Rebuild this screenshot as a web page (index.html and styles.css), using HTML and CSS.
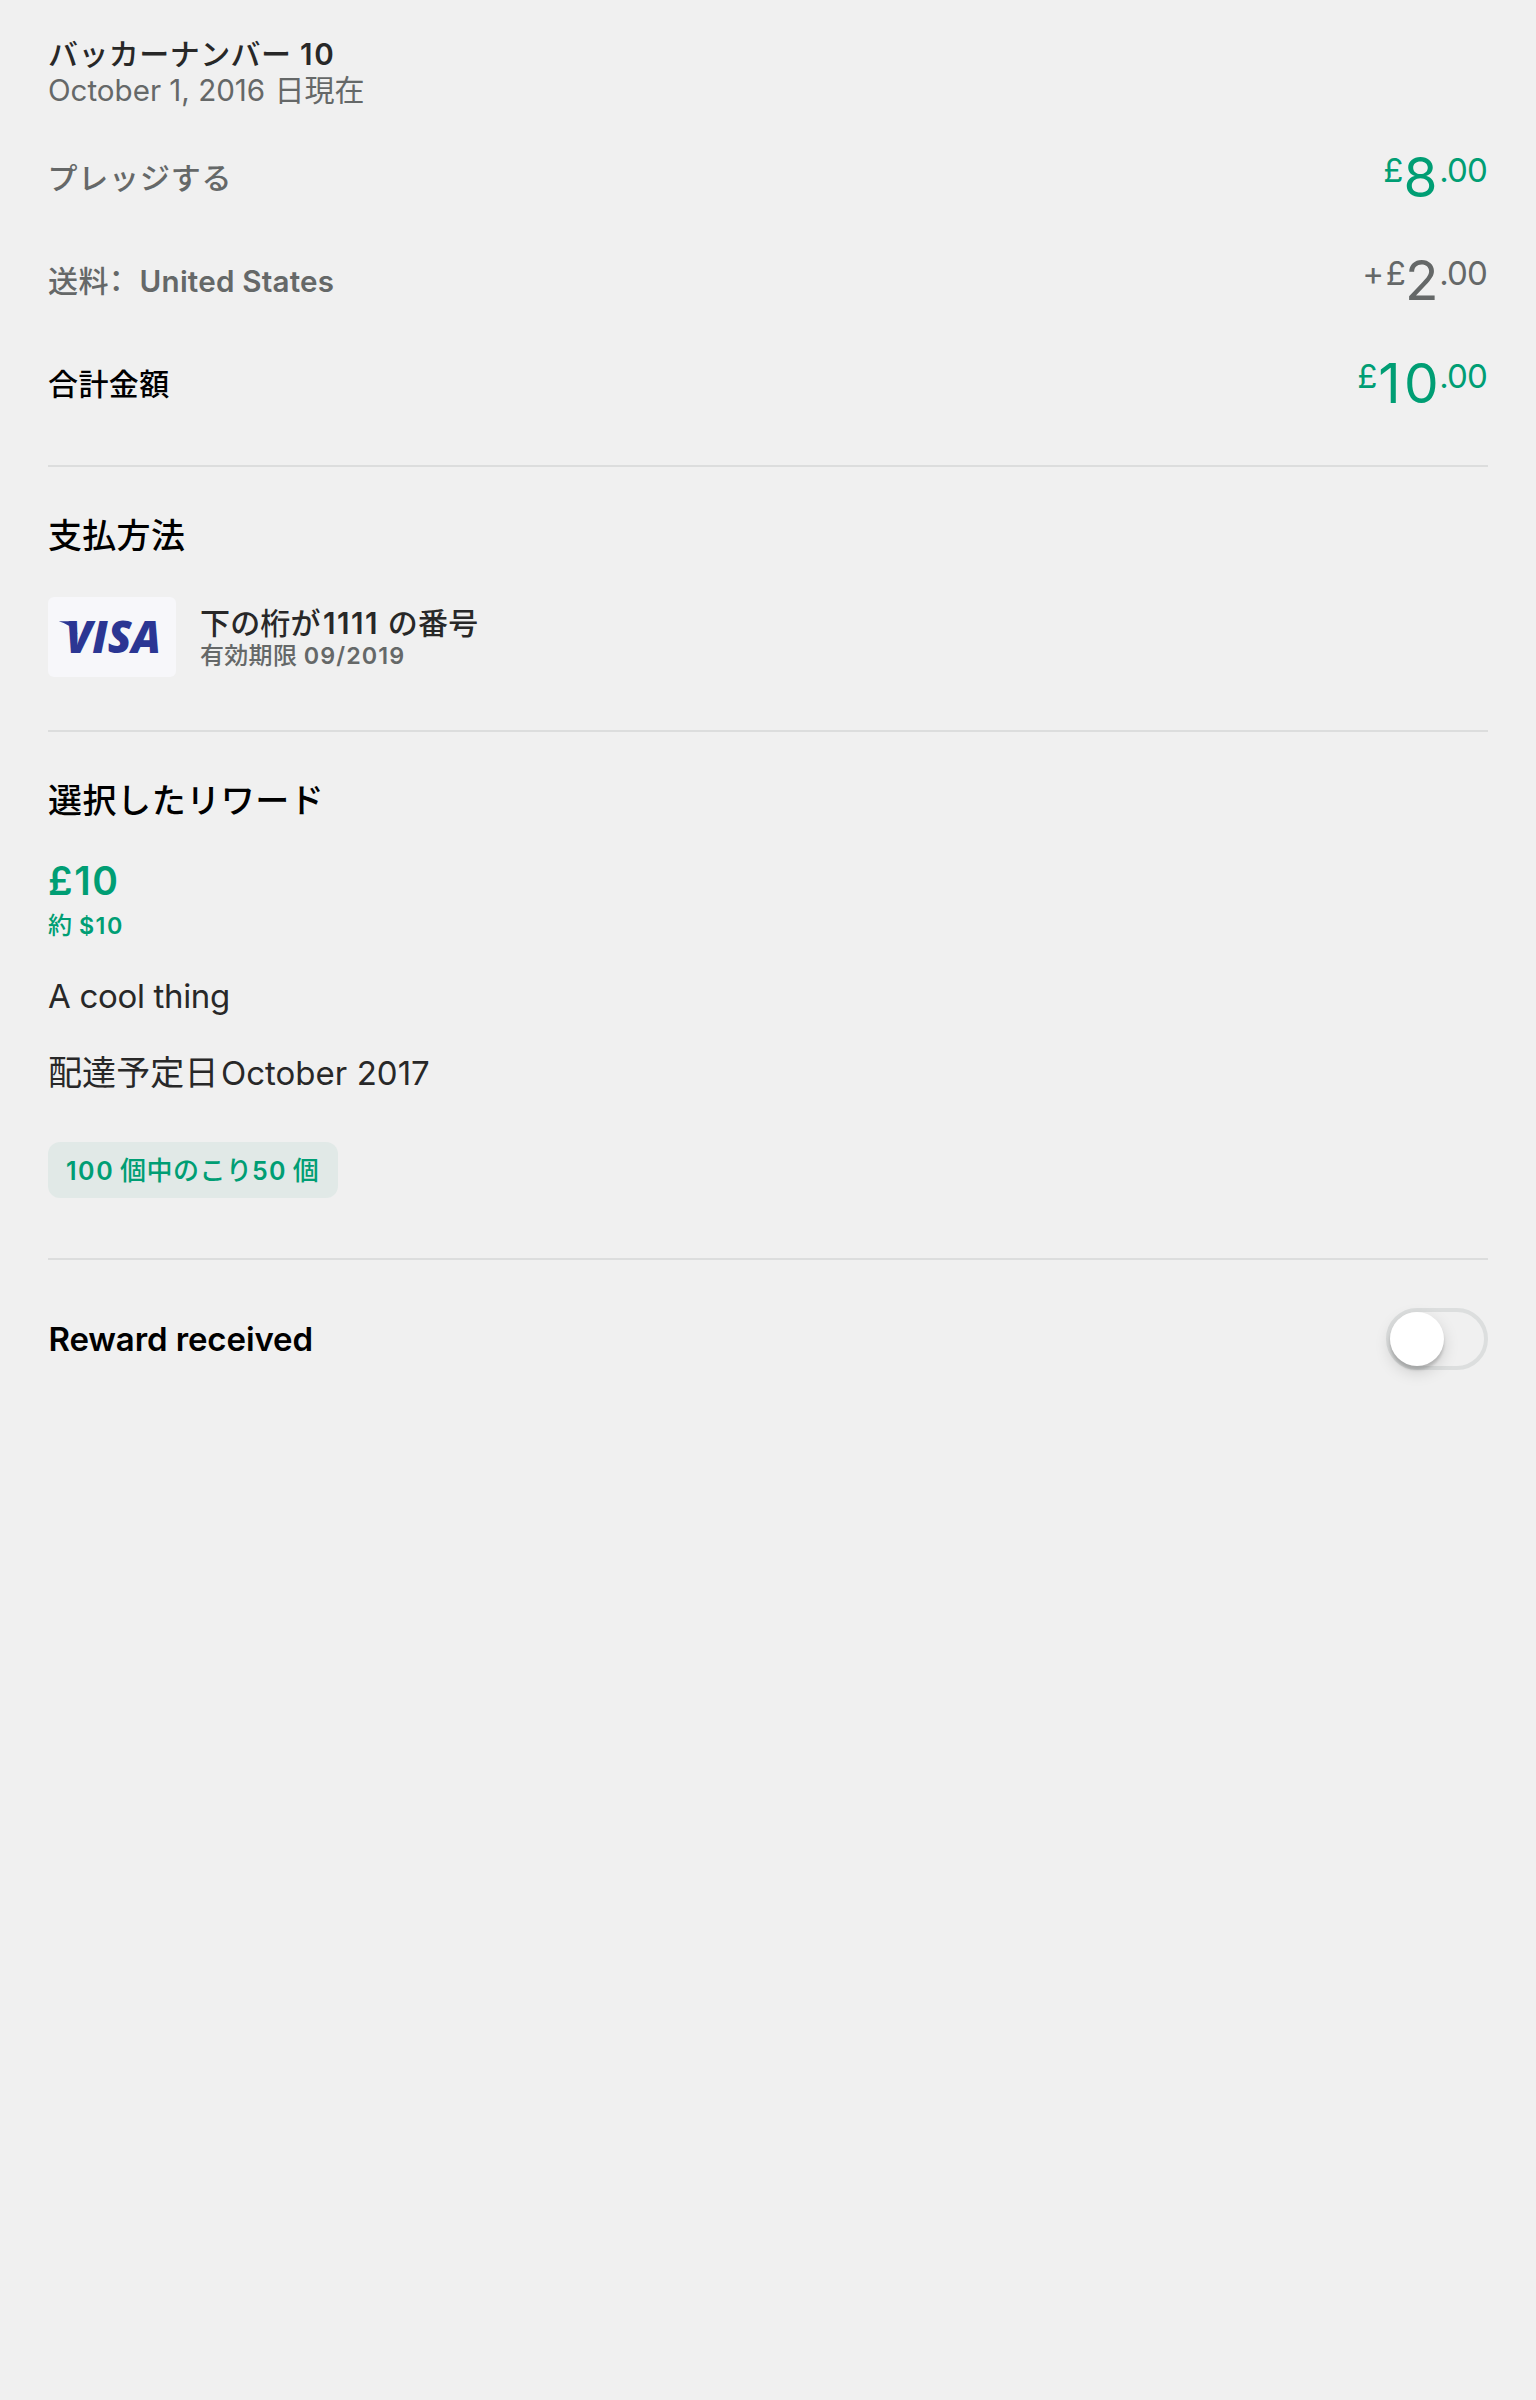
FILE: index.html
```html
<!DOCTYPE html>
<html lang="ja">
<head>
<meta charset="utf-8">
<title>バッカーナンバー 10</title>
<link rel="stylesheet" href="styles.css">
</head>
<body>
<main class="pledge">
  <section class="section summary">
    <div class="line md dark"><span class="cjk-medium" style="letter-spacing:.43px">バッカーナンバー</span> <span class="latin-bold" style="letter-spacing:1.6px;margin-left:8.6px">10</span></div>
    <div class="line md muted"><span style="letter-spacing:-.02px">October 1, 2016</span> <span class="cjk" style="letter-spacing:.1px;margin-left:9.2px">日現在</span></div>
    <div class="amounts">
      <div class="amount">
        <div class="line md muted"><span class="cjk-medium" style="letter-spacing:.8px;margin-left:-.5px">プレッジする</span></div>
        <div class="price green"><span class="minor">£</span><span class="major">8</span><span class="minor cents" style="margin-left:1.7px">.00</span></div>
      </div>
      <div class="amount">
        <div class="line md muted"><span class="cjk-medium" style="letter-spacing:.4px">送料</span><span class="cjk-medium colon">：</span><span class="latin-bold" style="letter-spacing:.2px">United States</span></div>
        <div class="price muted"><span class="minor" style="letter-spacing:1.6px">+£</span><span class="major" style="margin-left:-2.6px">2</span><span class="minor cents" style="margin-left:.7px">.00</span></div>
      </div>
      <div class="amount">
        <div class="line md black"><span class="cjk-medium" style="letter-spacing:.4px">合計金額</span></div>
        <div class="price green"><span class="minor">£</span><span class="major" style="letter-spacing:3.3px;margin-left:.9px">10</span><span class="minor cents" style="margin-left:-2.9px">.00</span></div>
      </div>
    </div>
  </section>

  <section class="section payment">
    <h2 class="line lg black"><span class="cjk-medium" style="letter-spacing:.3px">支払方法</span></h2>
    <div class="method">
      <div class="card">
        <svg width="128" height="80" viewBox="0 0 128 80" role="img" aria-label="Visa">
          <path d="M10.800 24.200H24q3 0 3.600 3l1.800 10Q23 27.500 10.800 24.200Z" fill="#2b3693"/>
          <g class="wordmark"><text x="17.500" y="55.800" textLength="95.500" lengthAdjust="spacingAndGlyphs">VISA</text></g>
        </svg>
      </div>
      <div class="details">
        <div class="line md dark"><span class="cjk-medium" style="letter-spacing:.17px">下の桁が</span><span class="latin-bold" style="letter-spacing:1.5px;margin-left:2.3px">1111</span> <span class="cjk-medium" style="letter-spacing:.2px;margin-left:8.8px">の番号</span></div>
        <div class="line sm muted"><span class="cjk-medium" style="letter-spacing:.3px">有効期限</span> <span class="latin-bold" style="letter-spacing:1.1px;margin-left:6.6px">09/2019</span></div>
      </div>
    </div>
  </section>

  <section class="section reward">
    <h2 class="line lg black"><span class="cjk-medium" style="letter-spacing:.55px">選択したリワード</span></h2>
    <div class="line xl green minimum"><span class="latin-bold" style="letter-spacing:1.6px">£10</span></div>
    <div class="line sm green"><span class="cjk-medium">約</span> <span class="latin-bold" style="letter-spacing:1.45px;margin-left:7px">$10</span></div>
    <p class="line lg dark description"><span style="letter-spacing:-.32px">A cool thing</span></p>
    <p class="line lg dark delivery"><span class="cjk" style="letter-spacing:.1px">配達予定日</span><span style="letter-spacing:.03px;margin-left:2.4px">October 2017</span></p>
    <div class="line badge green"><span class="latin-bold" style="letter-spacing:1.55px">100</span> <span class="cjk-medium" style="letter-spacing:.5px;margin-left:5.9px">個中のこり</span><span class="latin-bold" style="letter-spacing:1.3px;margin-left:-.7px">50</span> <span class="cjk-medium" style="margin-left:6px">個</span></div>
  </section>

  <section class="received">
    <div class="line lg black"><span class="latin-bold" style="letter-spacing:-.1px;margin-left:.4px">Reward received</span></div>
    <div class="switch" role="switch" aria-checked="false" aria-label="Reward received"><div class="knob"></div></div>
  </section>
</main>
</body>
</html>
```
FILE: styles.css
```css
* { box-sizing: border-box; }

body {
  margin: 0;
  min-height: 2400px;
  background: #f0f0f0;
  font-family: Inter, "Noto Sans CJK JP", sans-serif;
}

h2, p { margin: 0; }

.pledge { padding: 36px 48px 0; }

/* Text rows */
.line {
  display: flex;
  align-items: baseline;
  white-space: pre;
  font-weight: 400;
}
.sm { height: 28px; font-size: 23.3px; line-height: 30px; }
.md { height: 36px; font-size: 29.6px; line-height: 36px; }
.lg { height: 40px; font-size: 33px; line-height: 40px; }
.xl { height: 48px; font-size: 39px; line-height: 48px; }
.sm .cjk-medium { font-size: 24px; }
.md .cjk, .md .cjk-medium { font-size: 30px; }
.lg .cjk, .lg .cjk-medium { font-size: 34px; }

.cjk { font-weight: 400; }
.cjk-medium { font-weight: 500; }
.latin-bold { font-weight: 600; }
.colon { margin-right: 15.8px; font-feature-settings: "halt"; }

.dark { color: #282828; }
.black { color: #000; }
.muted { color: #656868; }
.green { color: #009e74; }

.section { border-bottom: 2px solid #dcdddd; }

/* Amounts */
.summary { padding-bottom: 52px; }
.amounts {
  display: flex;
  flex-direction: column;
  gap: 45px;
  margin-top: 41px;
}
.amount {
  display: flex;
  justify-content: space-between;
  height: 58px;
}
.amount .line { margin-top: 11px; }
.price {
  display: flex;
  align-items: flex-start;
  padding-right: 1.1px;
  line-height: 56px;
}
.major { font-size: 55px; }
.minor { font-size: 33px; line-height: 42px; }
.cents { letter-spacing: -.85px; }

/* Payment method */
.payment { padding: 49px 0 53px; }
.method {
  display: flex;
  gap: 24px;
  margin-top: 41px;
}
.card {
  width: 128px;
  height: 80px;
  border-radius: 6px;
  background: #f7f7fa;
}
.card svg { display: block; }
.wordmark {
  fill: #2b3693;
  font: italic 800 44px "Open Sans", sans-serif;
}
.details { padding-top: 8px; }

/* Reward */
.reward { padding: 49px 0 60px; }
.minimum { margin-top: 36px; }
.reward .sm { margin-top: 6px; }
.description { margin-top: 37px; }
.delivery { margin-top: 37px; }
.badge {
  width: 290px;
  height: 56px;
  margin-top: 49px;
  padding-left: 18px;
  border-radius: 12px;
  background: #e1e9e7;
  font-size: 25px;
  line-height: 57px;
}
.badge .cjk-medium { font-size: 26px; }

/* Reward received toggle */
.received {
  display: flex;
  align-items: center;
  justify-content: space-between;
  padding-top: 48px;
}
.switch {
  width: 102px;
  height: 62px;
  border: 4px solid #dcdede;
  border-radius: 31px;
}
.knob {
  width: 54px;
  height: 54px;
  border-radius: 50%;
  background: #fff;
  box-shadow: 0 6px 16px rgba(0, 0, 0, .15), 0 4px 3px rgba(0, 0, 0, .16);
}
```
